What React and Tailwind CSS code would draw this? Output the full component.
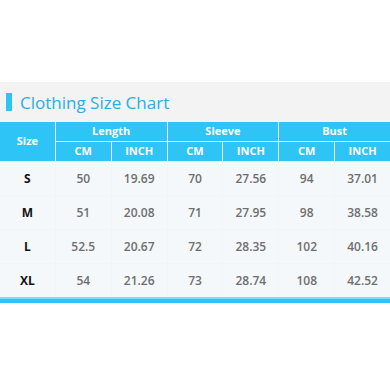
import React from 'react';

const rows = [
  ['S', '50', '19.69', '70', '27.56', '94', '37.01'],
  ['M', '51', '20.08', '71', '27.95', '98', '38.58'],
  ['L', '52.5', '20.67', '72', '28.35', '102', '40.16'],
  ['XL', '54', '21.26', '73', '28.74', '108', '42.52'],
];

const groups = ['Length', 'Sleeve', 'Bust'];

const App = () => {
  return (
    <div className="w-[390px] h-[390px] bg-white" style={{ fontFamily: '"Open Sans", "Liberation Sans", sans-serif' }}>
      <div className="h-[82px]" />

      {/* Title */}
      <div className="h-[40px] bg-[#f3f3f3] flex items-center pl-[6px]">
        <div className="w-[6px] h-[18px] bg-[#2ec4f6]" />
        <h1 className="ml-[8px] text-[17px] leading-none text-[#27aee6]">Clothing Size Chart</h1>
      </div>

      {/* Table */}
      <div className="grid grid-cols-7 gap-px bg-[#eef6fa]">
        <div className="row-span-2 bg-[#2ec4f6] flex items-center justify-center text-white font-bold text-[11px]">
          Size
        </div>
        {groups.map((g) => (
          <div key={g} className="col-span-2 h-[19px] bg-[#2ec4f6] flex items-center justify-center text-white font-bold text-[11px]">
            {g}
          </div>
        ))}
        {groups.map((g) => (
          <React.Fragment key={g + '-units'}>
            <div className="h-[19px] bg-[#2ec4f6] flex items-center justify-center text-white font-bold text-[11px]">CM</div>
            <div className="h-[19px] bg-[#2ec4f6] flex items-center justify-center text-white font-bold text-[11px]">INCH</div>
          </React.Fragment>
        ))}
        {rows.map((r) =>
          r.map((v, i) => (
            <div
              key={r[0] + i}
              className={`h-[33px] bg-[#f4f8fb] flex items-center justify-center text-[12px] ${
                i === 0 ? 'font-bold text-[#111111]' : 'font-semibold text-[#6e6e6e]'
              }`}
            >
              {v}
            </div>
          ))
        )}
      </div>

      <div className="h-[2px] bg-[#7fdaf8]" />
      <div className="h-[4px] bg-[#2ec4f6]" />
    </div>
  );
};

export default App;
